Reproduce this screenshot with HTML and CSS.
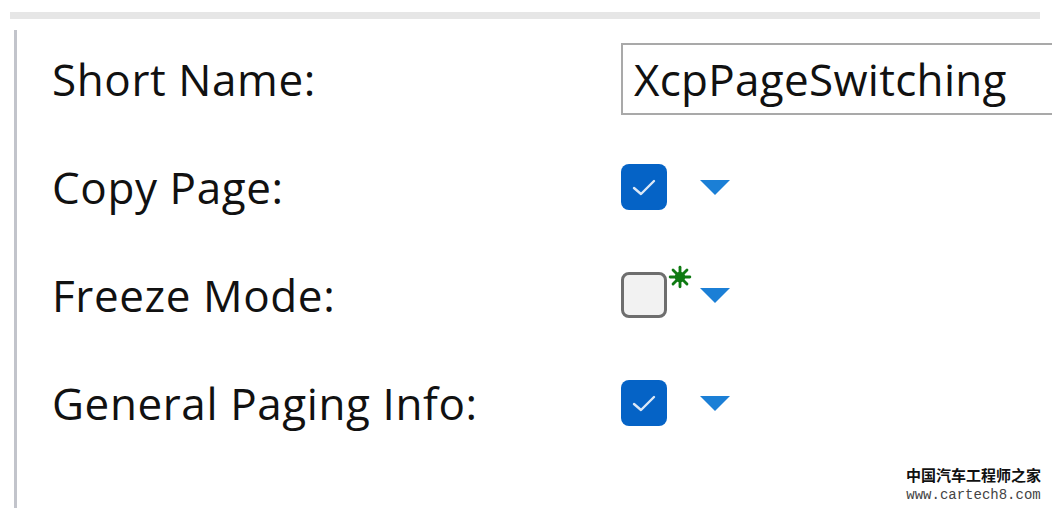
FILE: index.html
```html
<!DOCTYPE html>
<html lang="en">
<head>
    <meta charset="UTF-8">
    <title>XcpPageSwitching</title>
    <link rel="stylesheet" href="styles.css">
</head>
<body>
    <!-- Top strip -->
    <div class="topbar"></div>

    <!-- Properties panel -->
    <div class="frame">
        <div class="row">
            <div class="label">Short Name:</div>
            <div class="field">XcpPageSwitching</div>
        </div>
        <div class="row">
            <div class="label">Copy Page:</div>
            <div class="control">
                <span class="check on">
                    <svg viewBox="0 0 46 46"><polyline points="13 24 20 30 33 17"></polyline></svg>
                </span>
                <span class="arrow"></span>
            </div>
        </div>
        <div class="row">
            <div class="label">Freeze Mode:</div>
            <div class="control">
                <span class="check off">
                    <svg class="changed" viewBox="0 0 22 22">
                        <line x1="11" y1="2" x2="11" y2="20"></line>
                        <line x1="2" y1="11" x2="20" y2="11"></line>
                        <line x1="4.6" y1="4.6" x2="17.4" y2="17.4"></line>
                        <line x1="17.4" y1="4.6" x2="4.6" y2="17.4"></line>
                        <circle cx="11" cy="11" r="3.5"></circle>
                    </svg>
                </span>
                <span class="arrow"></span>
            </div>
        </div>
        <div class="row">
            <div class="label">General Paging Info:</div>
            <div class="control">
                <span class="check on">
                    <svg viewBox="0 0 46 46"><polyline points="13 24 20 30 33 17"></polyline></svg>
                </span>
                <span class="arrow"></span>
            </div>
        </div>
    </div>

    <!-- Watermark -->
    <div class="watermark">
        <div class="wm-cn">中国汽车工程师之家</div>
        <div class="wm-url">www.cartech8.com</div>
    </div>
</body>
</html>
```

FILE: styles.css
```css
* {
    margin: 0;
    padding: 0;
    box-sizing: border-box;
}

body {
    font-family: 'Open Sans', 'Noto Sans', sans-serif;
    color: #111;
    background: #fff;
    width: 1052px;
    height: 514px;
    overflow: hidden;
}

/* Top strip */
.topbar {
    height: 7px;
    margin: 12px 12px 0 10px;
    background: #e6e6e6;
}

/* Panel */
.frame {
    margin: 11px 0 0 14px;
    height: 478px;
    border-left: 3px solid #c2c4cb;
    padding: 13px 0 0 35px;
    display: flex;
    flex-direction: column;
    gap: 36px;
}

.row {
    height: 72px;
    display: flex;
    align-items: center;
}

.label {
    width: 569px;
    flex-shrink: 0;
    font-size: 44px;
    letter-spacing: 0.6px;
}

.field {
    width: 440px;
    height: 72px;
    flex-shrink: 0;
    border: 2px solid #a9a9a9;
    border-right: none;
    padding-left: 11px;
    display: flex;
    align-items: center;
    font-size: 44px;
    letter-spacing: 0.3px;
}

.control {
    display: flex;
    align-items: center;
}

.check {
    width: 46px;
    height: 46px;
    border-radius: 8px;
    position: relative;
}

.check.on {
    background: #0563c6;
}

.check.on svg {
    width: 46px;
    height: 46px;
    fill: none;
    stroke: #dbe8f7;
    stroke-width: 2.4;
    stroke-linecap: round;
    stroke-linejoin: round;
}

.check.off {
    background: #f2f2f2;
    border: 3px solid #6e6e6e;
}

.changed {
    position: absolute;
    top: -10px;
    right: -28px;
    width: 24px;
    height: 24px;
    stroke: #0f7a12;
    stroke-width: 2.6;
    stroke-linecap: round;
    fill: #0f7a12;
}

.arrow {
    margin-left: 33px;
    width: 0;
    height: 0;
    border-left: 15px solid transparent;
    border-right: 15px solid transparent;
    border-top: 15px solid #1b7fd6;
}

/* Watermark */
.watermark {
    position: absolute;
    left: 906px;
    top: 465px;
    text-align: center;
}

.wm-cn {
    font-family: 'Noto Sans CJK SC', sans-serif;
    font-weight: bold;
    font-size: 15px;
    line-height: 20px;
    color: #111;
}

.wm-url {
    font-family: 'Liberation Mono', monospace;
    font-size: 14px;
    line-height: 20px;
    color: #444;
}
```
